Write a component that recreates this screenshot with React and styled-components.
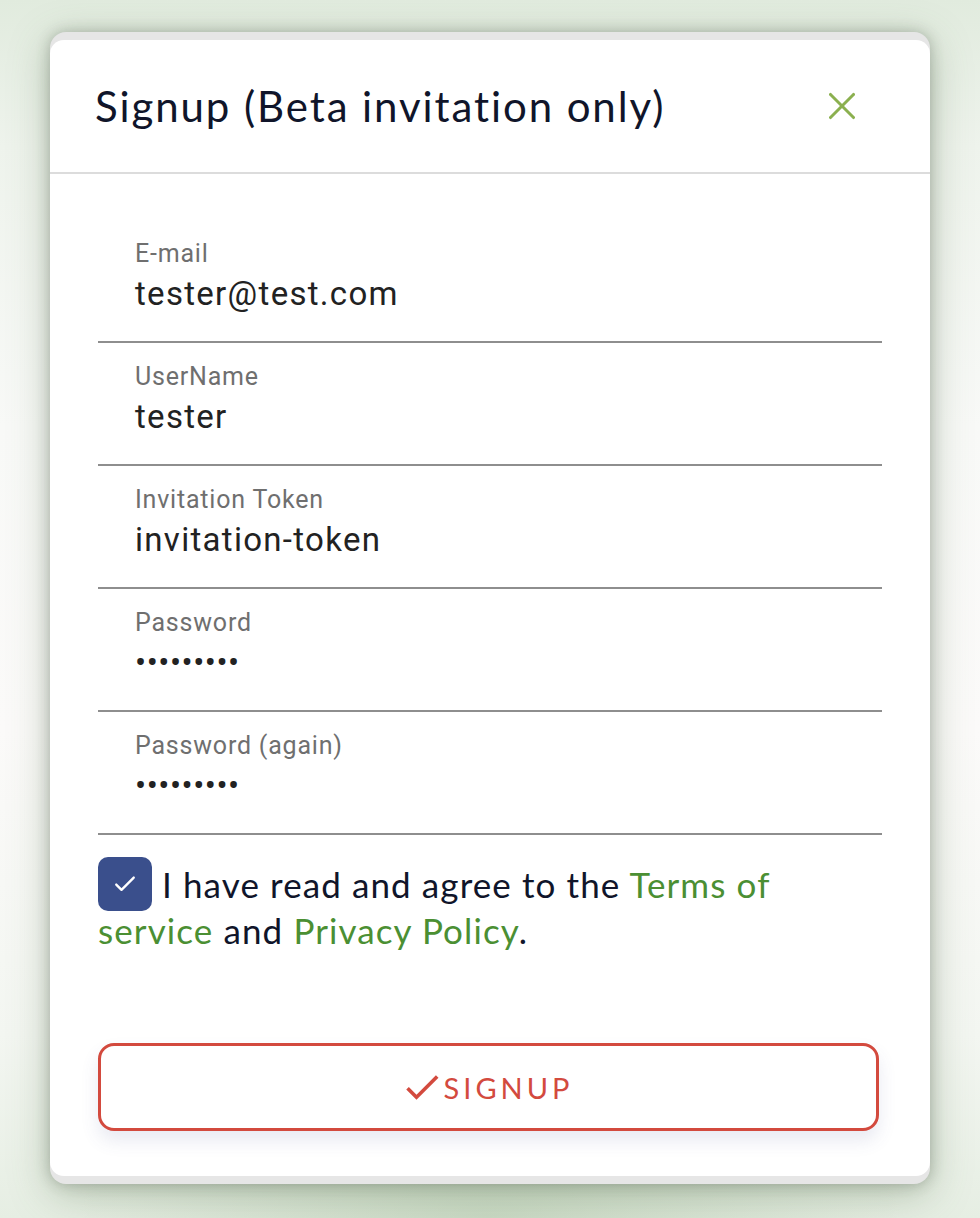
import React from 'react';
import styled, { createGlobalStyle } from 'styled-components';
import { X } from 'lucide-react';
import { MdCheck } from 'react-icons/md';

const GlobalStyle = createGlobalStyle`
  html, body {
    margin: 0;
    padding: 0;
  }
  body {
    min-height: 1218px;
    background:
      radial-gradient(ellipse 60% 20% at 50% 100%, rgba(150, 180, 140, 0.35), transparent 70%),
      linear-gradient(180deg, #e1ebde 0%, #eef3ec 12%, #f8f9f7 35%, #fbfaf9 60%, #f3f6f1 85%, #e6eee3 100%);
    font-family: 'Lato', 'Noto Sans', sans-serif;
  }
`;

const Page = styled.div`
  padding: 32px 50px 34px;
`;

const Card = styled.div`
  background: #e6e6e6;
  border-radius: 16px;
  padding: 8px 0;
  box-shadow:
    0 0 14px rgba(60, 70, 60, 0.3),
    0 10px 40px rgba(80, 110, 70, 0.35);
`;

const Sheet = styled.div`
  background: #ffffff;
  border-radius: 14px;
  overflow: hidden;
`;

const Header = styled.div`
  height: 132px;
  display: flex;
  align-items: center;
  justify-content: space-between;
  padding: 0 65px 0 45px;
  border-bottom: 2px solid #dcdcdc;
`;

const Title = styled.h1`
  margin: 0;
  font-family: 'Lato', 'Noto Sans', sans-serif;
  font-weight: 400;
  font-size: 42px;
  color: #10152a;
  letter-spacing: 1.9px;
`;

const CloseButton = styled.button`
  background: transparent;
  border: none;
  padding: 0;
  display: flex;
  color: #8bb04f;
  cursor: pointer;
`;

const Body = styled.div`
  padding: 46px 48px 45px;
`;

const Field = styled.div`
  padding: 20px 0 28px 37px;
  border-bottom: 2px solid #8e8e8e;
`;

const Label = styled.div`
  font-family: 'Roboto', sans-serif;
  font-size: 25px;
  line-height: 28px;
  letter-spacing: 0.8px;
  color: #6f6f6f;
`;

const Value = styled.div`
  margin-top: 7px;
  font-family: 'Roboto', sans-serif;
  font-size: 33px;
  line-height: 38px;
  color: #222222;
  letter-spacing: ${p => (p.$secret ? '0.5px' : '1.3px')};
`;

const Agreement = styled.p`
  margin: 26px 0 0;
  font-family: 'Lato', 'Noto Sans', sans-serif;
  font-size: 35px;
  line-height: 46px;
  letter-spacing: 1.1px;
  color: #10152a;
`;

const CheckBox = styled.span`
  display: inline-block;
  box-sizing: border-box;
  width: 54px;
  height: 54px;
  padding: 13px;
  margin: -5px 10px -5px 0;
  border-radius: 10px;
  background: #3a4f8c;
  color: #ffffff;
  vertical-align: -8px;

  svg {
    display: block;
  }
`;

const Link = styled.a`
  color: #4b8f33;
  text-decoration: none;
`;

const SubmitButton = styled.button`
  margin-top: 90px;
  box-sizing: border-box;
  width: 781px;
  height: 88px;
  display: flex;
  align-items: center;
  justify-content: center;
  gap: 0;
  padding: 0 4px 0 0;
  background: #ffffff;
  border: 3px solid #d34a3e;
  border-radius: 16px;
  box-shadow: 0 10px 18px rgba(70, 80, 150, 0.12);
  color: #d34a3e;
  font-family: 'Lato', 'Noto Sans', sans-serif;
  font-size: 29px;
  letter-spacing: 4px;
  cursor: pointer;
`;

const fields = [
  { label: 'E-mail', value: 'tester@test.com' },
  { label: 'UserName', value: 'tester' },
  { label: 'Invitation Token', value: 'invitation-token' },
  { label: 'Password', value: '•••••••••', secret: true },
  { label: 'Password (again)', value: '•••••••••', secret: true },
];

const App = () => {
  return (
    <Page>
      <GlobalStyle />
      <Card>
        <Sheet>
          <Header>
            <Title>Signup (Beta invitation only)</Title>
            <CloseButton aria-label="Close">
              <X size={46} strokeWidth={1.6} />
            </CloseButton>
          </Header>

          <Body>
            {fields.map(f => (
              <Field key={f.label}>
                <Label>{f.label}</Label>
                <Value $secret={f.secret}>{f.value}</Value>
              </Field>
            ))}

            <Agreement>
              <CheckBox>
                <svg width="28" height="28" viewBox="0 0 24 24" fill="none" stroke="currentColor" strokeWidth="2" strokeLinecap="round" strokeLinejoin="round">
                  <path d="M4.5 12.5l4.5 4.5L19.5 6.5" />
                </svg>
              </CheckBox>
              I have read and agree to the <Link href="#">Terms of service</Link> and{' '}
              <Link href="#">Privacy Policy</Link>.
            </Agreement>

            <SubmitButton>
              <MdCheck size={44} />
              SIGNUP
            </SubmitButton>
          </Body>
        </Sheet>
      </Card>
    </Page>
  );
};

export default App;
